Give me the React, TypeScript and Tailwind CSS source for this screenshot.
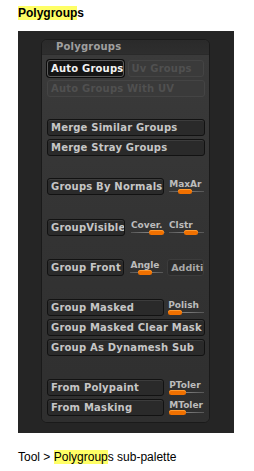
import React from "react";

const pix = { fontFamily: '"DejaVu Sans", "Liberation Sans", sans-serif' };

function Btn({ label, className = "", variant = "normal" }: { label: string; className?: string; variant?: "normal" | "active" | "disabled" | "flat" }) {
  const v =
    variant === "active"
      ? "bg-[#141414] border-[#5a5a5a] text-[#f2f2f2] shadow-[0_0_0_1px_#0c0c0c] text-[10px] tracking-[0.2px]"
      : variant === "disabled"
      ? "bg-[#3a3a3a] border-[#444444] text-[#505050] text-[10px] tracking-[0.2px]"
      : variant === "flat"
      ? "bg-[#2b2b2b] border-[#3c3c3c] text-[#a8a8a8] text-[9.5px]"
      : "bg-[#2a2a2a] border-[#121212] text-[#c6c6c6] shadow-[inset_0_1px_0_#3c3c3c] text-[10px] tracking-[0.2px]";
  return (
    <div
      className={`h-[17px] rounded-[3px] border flex items-center pl-[3px] overflow-hidden whitespace-nowrap font-bold leading-none ${v} ${className}`}
      style={pix}
    >
      {label}
    </div>
  );
}

function Slider({ label, pos, knobW = 14, className = "" }: { label: string; pos: number; knobW?: number; className?: string }) {
  return (
    <div className={`relative h-[17px] overflow-hidden ${className}`}>
      <div className="absolute left-0 top-[2px] text-[9px] font-bold leading-none text-[#bcbcbc] whitespace-nowrap" style={pix}>
        {label}
      </div>
      <div className="absolute left-0 right-0 top-[13px] h-px bg-gradient-to-r from-[#555] via-[#808080] to-[#555]" />
      <div
        className="absolute top-[11px] h-[5px] rounded-full bg-[#f07000] shadow-[inset_0_1px_0_#ff9a30]"
        style={{ left: pos, width: knobW }}
      />
    </div>
  );
}

export default function App() {
  return (
    <div className="w-[254px] h-[471px] bg-white relative" style={{ fontFamily: '"Liberation Sans", Arial, sans-serif' }}>
      <div className="pl-[18px] pt-[6px] h-[31px]">
        <div className="text-[12px] font-bold leading-[15px] text-black">
          <span className="bg-[#ffff66]">Polygroup</span>s
        </div>
      </div>
      <div className="ml-[18px] w-[216px] h-[402px] bg-[#252525] pt-[8px] pl-[23px]">
        <div className="w-[169px] h-[384px] rounded-[6px] border border-[#1a1a1a] bg-[#333333] overflow-hidden flex flex-col">
          <div className="h-[15px] bg-gradient-to-b from-[#2a2a2a] to-[#2e2e2e] border-b border-[#2a2a2a] pl-[14px] flex items-center">
            <span className="text-[10px] font-bold leading-none text-[#a0a0a0] tracking-[0.2px]" style={pix}>
              Polygroups
            </span>
          </div>
          <div className="flex-1 bg-gradient-to-b from-[#3a3a3a] via-[#333333] to-[#2f2f2f] pl-[5px] pr-[5px] pt-[5px] flex flex-col">
            <div className="flex gap-[4px]">
              <Btn label="Auto Groups" variant="active" className="w-[77px]" />
              <Btn label="Uv Groups" variant="disabled" className="w-[77px]" />
            </div>
            <Btn label="Auto Groups With UV" variant="disabled" className="mt-[3px] w-[158px]" />

            <Btn label="Merge Similar Groups" className="mt-[22px] w-[158px]" />
            <Btn label="Merge Stray Groups" className="mt-[3px] w-[158px]" />

            <div className="mt-[22px] flex gap-[5px]">
              <Btn label="Groups By Normals" className="w-[118px]" />
              <Slider label="MaxAr" pos={9} className="w-[35px]" />
            </div>

            <div className="mt-[24px] flex">
              <Btn label="GroupVisible" className="w-[78px]" />
              <Slider label="Cover." pos={18} knobW={15} className="ml-[6px] w-[34px]" />
              <Slider label="Clstr" pos={15} className="ml-[4px] w-[35px]" />
            </div>

            <div className="mt-[23px] flex">
              <Btn label="Group Front" className="w-[78px]" />
              <Slider label="Angle" pos={8} className="ml-[6px] w-[33px]" />
              <Btn label="Additi" variant="flat" className="ml-[4px] w-[37px] pl-[2px]" />
            </div>

            <div className="mt-[23px] flex gap-[4px]">
              <Btn label="Group Masked" className="w-[118px]" />
              <Slider label="Polish" pos={0} className="w-[36px]" />
            </div>
            <Btn label="Group Masked Clear Mask" className="mt-[3px] w-[158px]" />
            <Btn label="Group As Dynamesh Sub" className="mt-[3px] w-[158px]" />

            <div className="mt-[23px] flex gap-[5px]">
              <Btn label="From Polypaint" className="w-[118px]" />
              <Slider label="PToler" pos={0} knobW={17} className="w-[35px]" />
            </div>
            <div className="mt-[3px] flex gap-[5px]">
              <Btn label="From Masking" className="w-[118px]" />
              <Slider label="MToler" pos={0} knobW={17} className="w-[35px]" />
            </div>
          </div>
        </div>
      </div>
      <div className="pl-[18px] pt-[17px] text-[12px] leading-[14px] text-black">
        Tool &gt; <span className="bg-[#ffff66]">Polygroup</span>s sub-palette
      </div>
    </div>
  );
}
